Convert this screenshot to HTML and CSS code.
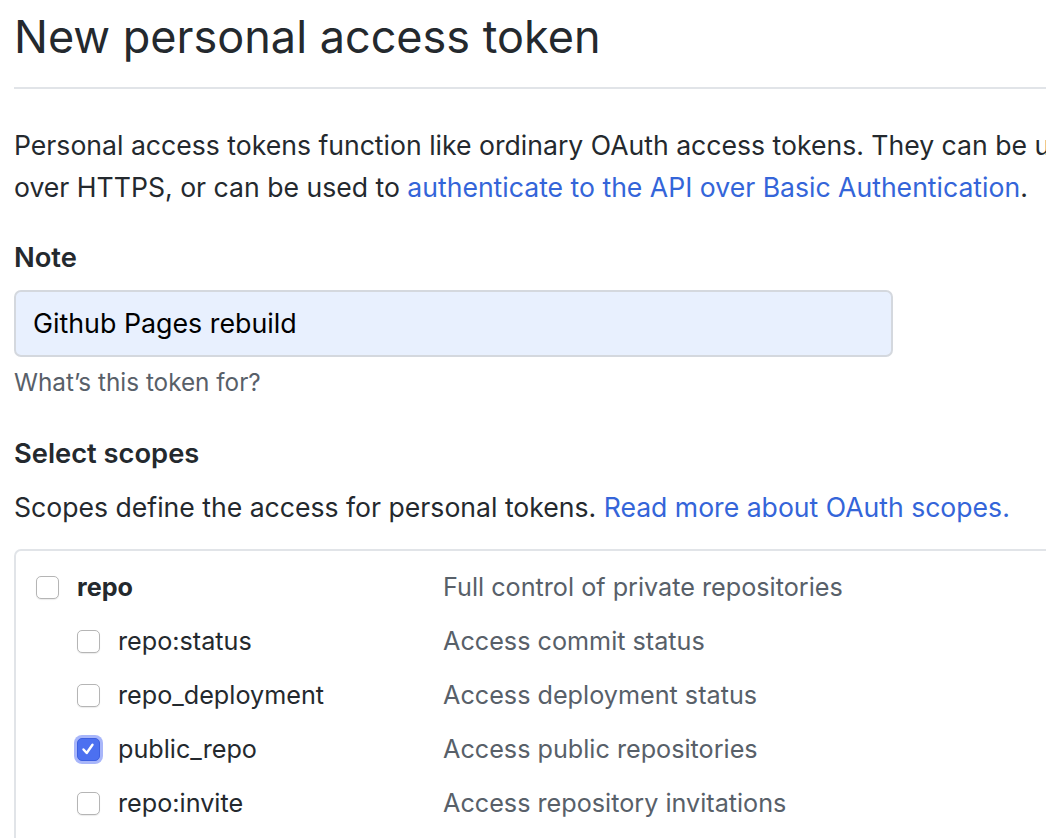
FILE: index.html
```html
<!DOCTYPE html>
<html>
<head>
<meta charset="utf-8">
<link rel="stylesheet" href="styles.css">
</head>
<body>
<div class="page">
  <h1 class="title">New personal access token</h1>
  <p class="lead">Personal access tokens function like ordinary OAuth access tokens. They can be used instead of a password for Git<br>over HTTPS, or can be used to <a href="#">authenticate to the API over Basic Authentication</a>.</p>

  <div class="field">
    <label class="label">Note</label>
    <div class="input">Github Pages rebuild</div>
    <p class="hint">What’s this token for?</p>
  </div>

  <h2 class="label scopes-title">Select scopes</h2>
  <p class="lead scopes-lead">Scopes define the access for personal tokens. <a href="#">Read more about OAuth scopes.</a></p>

  <div class="scopes">
    <div class="row">
      <div class="name"><span class="cb"></span><strong>repo</strong></div>
      <div class="desc">Full control of private repositories</div>
    </div>
    <div class="row sub">
      <div class="name"><span class="cb"></span><span>repo:status</span></div>
      <div class="desc">Access commit status</div>
    </div>
    <div class="row sub">
      <div class="name"><span class="cb"></span><span>repo_deployment</span></div>
      <div class="desc">Access deployment status</div>
    </div>
    <div class="row sub">
      <div class="name"><span class="cb checked"><svg viewBox="0 0 22 22" width="22" height="22"><path d="M6.5 11.5 L9.7 15 L15.5 6.8" fill="none" stroke="#fff" stroke-width="2.4" stroke-linecap="round" stroke-linejoin="round"/></svg></span><span>public_repo</span></div>
      <div class="desc">Access public repositories</div>
    </div>
    <div class="row sub">
      <div class="name"><span class="cb"></span><span>repo:invite</span></div>
      <div class="desc">Access repository invitations</div>
    </div>
  </div>
</div>
</body>
</html>
```

FILE: styles.css
```css
html, body {
  margin: 0;
  padding: 0;
  background: #fff;
  overflow: hidden;
}
body {
  font-family: Inter, "Noto Sans", "Liberation Sans", sans-serif;
  color: #24292e;
  width: 1046px;
  height: 838px;
}
.page {
  width: 1600px;
  padding-left: 14px;
}
.title {
  margin: 0;
  font-size: 45px;
  font-weight: 400;
  line-height: 60px;
  padding-top: 7px;
  padding-bottom: 20px;
  border-bottom: 2px solid #e1e4e8;
}
.lead {
  margin: 35px 0 0;
  font-size: 26.6px;
  line-height: 42px;
  white-space: nowrap;
}
a {
  color: #3465d9;
  text-decoration: none;
}
.field {
  margin-top: 29px;
}
.label {
  display: block;
  margin: 0;
  font-size: 27.3px;
  line-height: 42px;
  font-weight: 600;
}
.input {
  box-sizing: border-box;
  margin-top: 11px;
  width: 879px;
  height: 67px;
  background: #e8f0fe;
  border: 2px solid #d4d8de;
  border-radius: 7px;
  padding-left: 17px;
  font-size: 26.8px;
  line-height: 63px;
  color: #000;
}
.hint {
  margin: 7px 0 0;
  font-size: 24.3px;
  line-height: 36px;
  color: #586069;
}
.scopes-title {
  margin-top: 33px;
}
.scopes-lead {
  margin-top: 11px;
}
.scopes {
  margin-top: 21px;
  border: 2px solid #e1e4e8;
  border-radius: 7px;
  padding-top: 9px;
  height: 400px;
}
.row {
  display: grid;
  grid-template-columns: 407px 1fr;
  height: 54px;
  align-items: center;
  padding-left: 20px;
  font-size: 25.2px;
}
.name {
  display: flex;
  align-items: center;
  gap: 18px;
}
.sub .name {
  padding-left: 41px;
}
.name strong {
  font-weight: 700;
}
.desc {
  color: #586069;
}
.cb {
  box-sizing: border-box;
  width: 23px;
  height: 23px;
  border: 1px solid #b5b5b5;
  border-radius: 5px;
  background: #fff;
  box-shadow: 0 1px 1px rgba(0,0,0,0.08);
  flex: none;
  display: inline-block;
}
.cb.checked {
  background: #4c70f0;
  border-color: #3d5fe0;
  box-shadow: 0 0 0 3px #a8b6fa;
}
.cb svg {
  display: block;
  margin: -1px;
}
```
